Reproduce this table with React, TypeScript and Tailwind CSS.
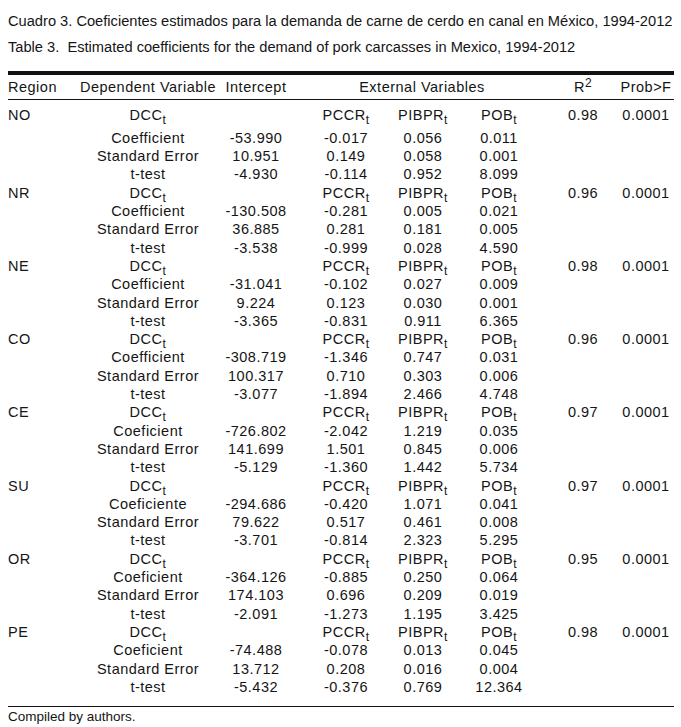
import React from "react";

type Group = {
  region: string;
  r2: string;
  rows: [string, string, string, string, string][];
};

const groups: Group[] = [
  { region: "NO", r2: "0.98", rows: [
    ["Coefficient", "-53.990", "-0.017", "0.056", "0.011"],
    ["Standard Error", "10.951", "0.149", "0.058", "0.001"],
    ["t-test", "-4.930", "-0.114", "0.952", "8.099"],
  ]},
  { region: "NR", r2: "0.96", rows: [
    ["Coefficient", "-130.508", "-0.281", "0.005", "0.021"],
    ["Standard Error", "36.885", "0.281", "0.181", "0.005"],
    ["t-test", "-3.538", "-0.999", "0.028", "4.590"],
  ]},
  { region: "NE", r2: "0.98", rows: [
    ["Coefficient", "-31.041", "-0.102", "0.027", "0.009"],
    ["Standard Error", "9.224", "0.123", "0.030", "0.001"],
    ["t-test", "-3.365", "-0.831", "0.911", "6.365"],
  ]},
  { region: "CO", r2: "0.96", rows: [
    ["Coefficient", "-308.719", "-1.346", "0.747", "0.031"],
    ["Standard Error", "100.317", "0.710", "0.303", "0.006"],
    ["t-test", "-3.077", "-1.894", "2.466", "4.748"],
  ]},
  { region: "CE", r2: "0.97", rows: [
    ["Coeficient", "-726.802", "-2.042", "1.219", "0.035"],
    ["Standard Error", "141.699", "1.501", "0.845", "0.006"],
    ["t-test", "-5.129", "-1.360", "1.442", "5.734"],
  ]},
  { region: "SU", r2: "0.97", rows: [
    ["Coeficiente", "-294.686", "-0.420", "1.071", "0.041"],
    ["Standard Error", "79.622", "0.517", "0.461", "0.008"],
    ["t-test", "-3.701", "-0.814", "2.323", "5.295"],
  ]},
  { region: "OR", r2: "0.95", rows: [
    ["Coeficient", "-364.126", "-0.885", "0.250", "0.064"],
    ["Standard Error", "174.103", "0.696", "0.209", "0.019"],
    ["t-test", "-2.091", "-1.273", "1.195", "3.425"],
  ]},
  { region: "PE", r2: "0.98", rows: [
    ["Coeficient", "-74.488", "-0.078", "0.013", "0.045"],
    ["Standard Error", "13.712", "0.208", "0.016", "0.004"],
    ["t-test", "-5.432", "-0.376", "0.769", "12.364"],
  ]},
];

const GRID = "grid grid-cols-[72px_136px_80px_100px_54px_98px_70px_56px]";

function C({ children, left }: { children?: React.ReactNode; left?: boolean }) {
  return (
    <div className={`flex whitespace-nowrap ${left ? "justify-start" : "justify-center"}`}>
      {children}
    </div>
  );
}

function Sub({ base }: { base: string }) {
  return (
    <span>
      {base}
      <span className="relative top-[4px] text-[12px] leading-none">t</span>
    </span>
  );
}

export default function App() {
  return (
    <div
      className="w-[681px] h-[727px] bg-white text-[#151515] overflow-hidden"
      style={{ fontFamily: '"Liberation Sans", Arial, sans-serif' }}
    >
      <div className="pl-[8px] pr-[7px]">
        <div className="pt-[12px] h-[30px]">
          <div className="w-[702px] origin-left scale-x-[0.945] text-[15.5px] leading-[18px] text-justify [text-align-last:justify] whitespace-nowrap">
            Cuadro 3. Coeficientes estimados para la demanda de carne de cerdo en canal en México, 1994-2012
          </div>
        </div>
        <div className="mt-[8px] h-[18px]">
          <div className="w-[702px] origin-left scale-x-[0.945] text-[15.5px] leading-[18px] whitespace-nowrap">
            Table 3.&nbsp;&nbsp;Estimated coefficients for the demand of pork carcasses in Mexico, 1994-2012
          </div>
        </div>

        <div className="mt-[15px] h-[4px] bg-[#111]" />

        <div className="text-[14.5px] tracking-[0.5px]">
          <div className={`${GRID} h-[24px] items-center pt-[1px]`}>
            <C left>Region</C>
            <C>Dependent Variable</C>
            <C>Intercept</C>
            <div className="col-span-3 flex justify-center whitespace-nowrap">External Variables</div>
            <C>
              <span>R<span className="relative top-[-5px] text-[12px] leading-none">2</span></span>
            </C>
            <C>Prob&gt;F</C>
          </div>
          <div className="h-px bg-[#111]" />

          <div className="pt-[6px] pb-[10px] leading-[18.3px]">
            {groups.map((g, gi) => (
              <div key={g.region}>
                <div className={`${GRID} h-[18.3px] ${gi === 0 ? "mb-[4.6px]" : ""}`}>
                  <C left>{g.region}</C>
                  <C><Sub base="DCC" /></C>
                  <C />
                  <C><Sub base="PCCR" /></C>
                  <C><Sub base="PIBPR" /></C>
                  <C><Sub base="POB" /></C>
                  <C>{g.r2}</C>
                  <C>0.0001</C>
                </div>
                {g.rows.map((r, ri) => (
                  <div key={ri} className={`${GRID} h-[18.3px]`}>
                    <C />
                    {r.map((v, vi) => (
                      <C key={vi}>{v}</C>
                    ))}
                    <C />
                    <C />
                  </div>
                ))}
              </div>
            ))}
          </div>
          <div className="h-px bg-[#111]" />
        </div>

        <div className="mt-[2px] text-[13.5px] leading-[16px]">
          Compiled by authors.
        </div>
      </div>
    </div>
  );
}
